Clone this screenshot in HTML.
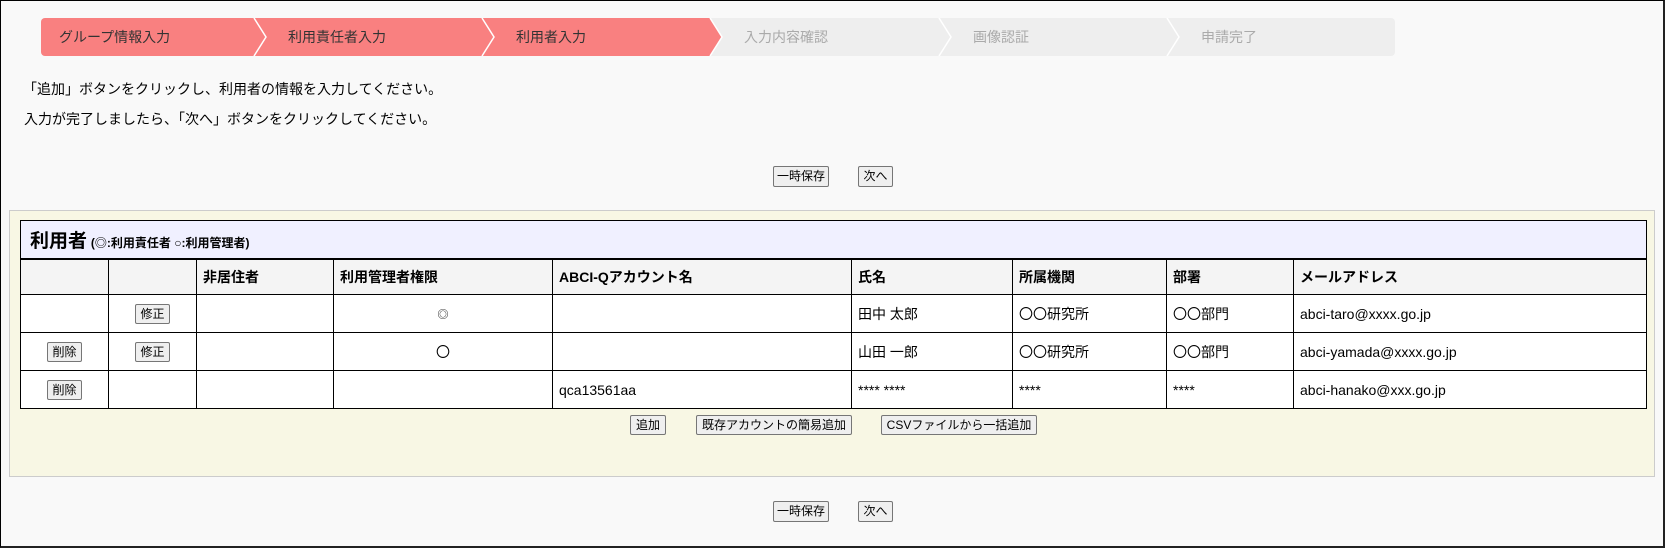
<!DOCTYPE html>
<html><head><meta charset="utf-8"><style>
*{box-sizing:border-box;margin:0;padding:0}
html,body{width:1665px;height:548px;overflow:hidden}
body{background:#f9f9f9;font-family:"Liberation Sans","Noto Sans CJK JP",sans-serif;font-size:14px;color:#000;position:relative;border:1px solid #000;border-right:2px solid #222;border-bottom:2px solid #222}
.a{position:absolute}
.steps{left:40px;top:17px;width:1354px;height:38px;border-radius:4px;overflow:hidden}
.st{position:absolute;top:0;height:38px;line-height:38px;font-size:14px;color:#333}
.btn{position:absolute;background:#efefef;border:1px solid #767676;border-radius:2px;font-size:12px;text-align:center;line-height:18px;height:21px}
.panel{left:8px;top:209px;width:1646px;height:267px;background:#f8f7e4;border:1px solid #ccc}
table{position:absolute;left:19px;top:219px;width:1627px;border-collapse:collapse;font-size:14px}
td,th{border:1px solid #000;background:#fff;text-align:left;padding:0 6px;height:38px}
th{background:#f4f4f4;font-weight:bold;height:36px}
.cap td{background:#f0f0ff;border-bottom:2px solid #000;height:38px;padding-left:9px}
.c{text-align:center}
.ib{display:inline-block;background:#efefef;border:1px solid #767676;border-radius:2px;font-size:12px;line-height:18px;padding:0 4px}
</style></head><body>
<div class="a steps">
<svg width="1354" height="38" style="position:absolute;left:0;top:0">
<polygon points="0,0 1354,0 1354,38 0,38" fill="#eeeeee"/>
<polygon points="0,0 669,0 681,19 669,38 0,38" fill="#f98080"/>
<g fill="none" stroke="#fff" stroke-width="1.5">
<polyline points="213,0 225,19 213,38"/><polyline points="441,0 453,19 441,38"/><polyline points="669,0 681,19 669,38"/><polyline points="898,0 910,19 898,38"/><polyline points="1126,0 1138,19 1126,38"/>
</g></svg>
<div class="st" style="left:18px">グループ情報入力</div>
<div class="st" style="left:247px">利用責任者入力</div>
<div class="st" style="left:475px">利用者入力</div>
<div class="st" style="left:703px;color:#aaa">入力内容確認</div>
<div class="st" style="left:932px;color:#aaa">画像認証</div>
<div class="st" style="left:1160px;color:#aaa">申請完了</div>
</div>
<div class="a" style="left:22px;top:78px">「追加」ボタンをクリックし、利用者の情報を入力してください。</div>
<div class="a" style="left:23px;top:108px">入力が完了しましたら、「次へ」ボタンをクリックしてください。</div>
<div class="btn" style="left:772px;top:165px;width:56px">一時保存</div>
<div class="btn" style="left:857px;top:165px;width:35px">次へ</div>
<div class="a panel"></div>
<table>
<tr class="cap"><td colspan="9"><b style="font-size:19px">利用者</b> <b style="font-size:12px">(◎:利用責任者 ○:利用管理者)</b></td></tr>
<tr><th style="width:88px"></th><th style="width:88px"></th><th style="width:137px">非居住者</th><th style="width:219px">利用管理者権限</th><th style="width:299px">ABCI-Qアカウント名</th><th style="width:161px">氏名</th><th style="width:154px">所属機関</th><th style="width:127px">部署</th><th>メールアドレス</th></tr>
<tr><td></td><td class="c"><span class="ib">修正</span></td><td></td><td class="c" style="font-size:11px">◎</td><td></td><td>田中 太郎</td><td>〇〇研究所</td><td>〇〇部門</td><td>abci-taro@xxxx.go.jp</td></tr>
<tr><td class="c"><span class="ib">削除</span></td><td class="c"><span class="ib">修正</span></td><td></td><td class="c">〇</td><td></td><td>山田 一郎</td><td>〇〇研究所</td><td>〇〇部門</td><td>abci-yamada@xxxx.go.jp</td></tr>
<tr><td class="c"><span class="ib">削除</span></td><td></td><td></td><td></td><td>qca13561aa</td><td>**** ****</td><td>****</td><td>****</td><td>abci-hanako@xxx.go.jp</td></tr>
</table>
<div class="btn" style="left:629px;top:414px;width:36px;height:20px">追加</div>
<div class="btn" style="left:695px;top:414px;width:156px;height:20px">既存アカウントの簡易追加</div>
<div class="btn" style="left:880px;top:414px;width:156px;height:20px">CSVファイルから一括追加</div>
<div class="btn" style="left:772px;top:500px;width:56px">一時保存</div>
<div class="btn" style="left:857px;top:500px;width:35px">次へ</div>
</body></html>
